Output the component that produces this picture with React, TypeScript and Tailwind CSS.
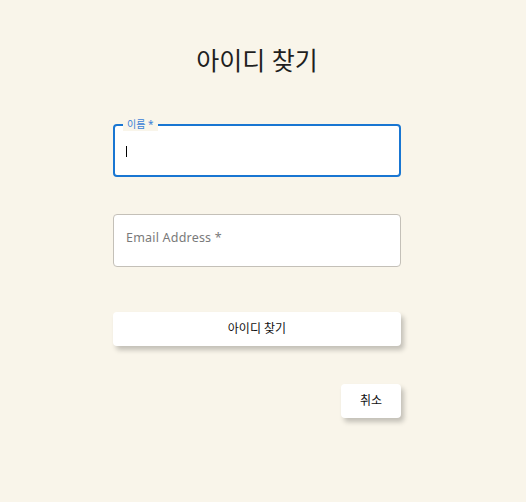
import React from "react";

export default function App() {
  const font = { fontFamily: '"Noto Sans", "Noto Sans CJK KR", sans-serif' };
  return (
    <div className="min-h-screen w-full bg-[#f9f5ea]" style={font}>
      <div className="flex justify-center pr-[12px]">
        <div className="flex w-[288px] flex-col pt-[42px]">
          <h1 className="text-center text-[25px] leading-[36px] font-normal text-[#1f1f1f]">아이디 찾기</h1>
          <div className="relative mt-[46px] h-[53px] rounded-[4px] border-2 border-[#1976d2] bg-white">
            <span className="absolute -top-[9px] left-[8px] bg-[#f9f5ea] px-[4px] text-[10px] leading-[14px] text-[#3b82d6]">이름 *</span>
            <div className="absolute left-[11px] top-[20px] h-[11px] w-[1px] bg-black" />
          </div>
          <div className="relative mt-[37px] h-[53px] rounded-[4px] border border-[#c4c0b8] bg-white pl-[12px] pt-[15px]">
            <span className="block text-[12.5px] leading-[16px] tracking-[0.2px] text-[#7a7a7a]">Email Address *</span>
          </div>
          <button className="mt-[45px] h-[34px] w-full rounded-[4px] bg-white text-[12px] text-[#111] shadow-[3px_4px_5px_rgba(0,0,0,0.22)]">아이디 찾기</button>
          <div className="mt-[38px] flex justify-end">
            <button className="h-[34px] w-[60px] rounded-[4px] bg-white text-[12px] text-[#111] shadow-[3px_4px_5px_rgba(0,0,0,0.22)]">취소</button>
          </div>
        </div>
      </div>
    </div>
  );
}
